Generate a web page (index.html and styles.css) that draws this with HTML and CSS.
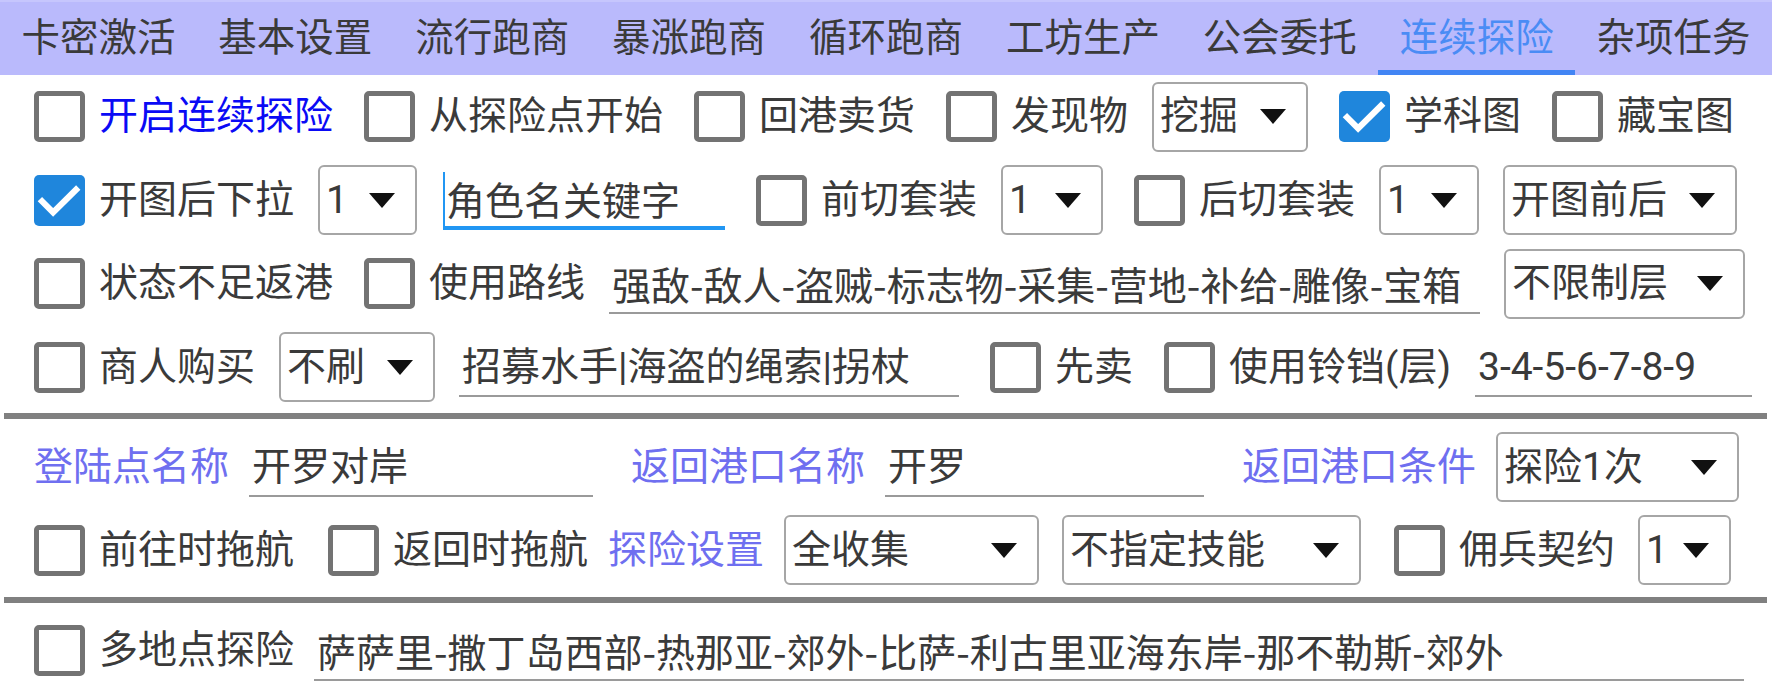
FILE: index.html
```html
<!DOCTYPE html>
<html lang="zh-CN">
<head>
<meta charset="utf-8">
<title>连续探险</title>
<link rel="stylesheet" href="styles.css">
</head>
<body>
<div class="tabs">
  <div class="tab">卡密激活</div>
  <div class="tab">基本设置</div>
  <div class="tab">流行跑商</div>
  <div class="tab">暴涨跑商</div>
  <div class="tab">循环跑商</div>
  <div class="tab">工坊生产</div>
  <div class="tab">公会委托</div>
  <div class="tab active">连续探险</div>
  <div class="tab">杂项任务</div>
</div>

<div class="panel">
  <div class="row top">
    <div class="cb"><span class="box"></span><span class="lbl blue">开启连续探险</span></div>
    <div class="cb"><span class="box"></span><span class="lbl">从探险点开始</span></div>
    <div class="cb"><span class="box"></span><span class="lbl">回港卖货</span></div>
    <div class="cb"><span class="box"></span><span class="lbl">发现物</span></div>
    <div class="sel w156"><span>挖掘</span><span class="arrow"></span></div>
    <div class="cb"><span class="box on"><svg viewBox="0 0 24 24"><path d="M3.8 12.4 L9 17.6 L19.8 6.9" fill="none" stroke="#fff" stroke-width="2.9" stroke-linecap="square"/></svg></span><span class="lbl">学科图</span></div>
    <div class="cb"><span class="box"></span><span class="lbl">藏宝图</span></div>
  </div>

  <div class="row top">
    <div class="cb"><span class="box on"><svg viewBox="0 0 24 24"><path d="M3.8 12.4 L9 17.6 L19.8 6.9" fill="none" stroke="#fff" stroke-width="2.9" stroke-linecap="square"/></svg></span><span class="lbl">开图后下拉</span></div>
    <div class="sel w99"><span>1</span><span class="arrow"></span></div>
    <div class="inp focus w282 after-sel"><span class="caret"></span><span>角色名关键字</span></div>
    <div class="cb"><span class="box"></span><span class="lbl">前切套装</span></div>
    <div class="sel w102"><span>1</span><span class="arrow"></span></div>
    <div class="cb"><span class="box"></span><span class="lbl">后切套装</span></div>
    <div class="sel w100"><span>1</span><span class="arrow"></span></div>
    <div class="sel w234"><span>开图前后</span><span class="arrow"></span></div>
  </div>

  <div class="row top">
    <div class="cb"><span class="box"></span><span class="lbl">状态不足返港</span></div>
    <div class="cb"><span class="box"></span><span class="lbl">使用路线</span></div>
    <div class="inp cjk w871"><span>强敌-敌人-盗贼-标志物-采集-营地-补给-雕像-宝箱</span></div>
    <div class="sel w241"><span>不限制层</span><span class="arrow"></span></div>
  </div>

  <div class="row top">
    <div class="cb"><span class="box"></span><span class="lbl">商人购买</span></div>
    <div class="sel w156"><span>不刷</span><span class="arrow"></span></div>
    <div class="inp w500"><span>招募水手|海盗的绳索|拐杖</span></div>
    <div class="cb"><span class="box"></span><span class="lbl">先卖</span></div>
    <div class="cb"><span class="box"></span><span class="lbl">使用铃铛(层)</span></div>
    <div class="inp w277"><span>3-4-5-6-7-8-9</span></div>
  </div>

  <div class="divider first"></div>

  <div class="row port">
    <span class="title">登陆点名称</span>
    <div class="inp w344 near"><span>开罗对岸</span></div>
    <span class="title far">返回港口名称</span>
    <div class="inp w319 near"><span>开罗</span></div>
    <span class="title far">返回港口条件</span>
    <div class="sel w243 near"><span>探险1次</span><span class="arrow"></span></div>
  </div>

  <div class="row tow">
    <div class="cb"><span class="box"></span><span class="lbl">前往时拖航</span></div>
    <div class="cb wide"><span class="box"></span><span class="lbl">返回时拖航</span></div>
    <span class="title near">探险设置</span>
    <div class="sel w255 near"><span>全收集</span><span class="arrow"></span></div>
    <div class="sel w299 snug"><span>不指定技能</span><span class="arrow"></span></div>
    <div class="cb after-wide"><span class="box"></span><span class="lbl">佣兵契约</span></div>
    <div class="sel w93 snug"><span>1</span><span class="arrow"></span></div>
  </div>

  <div class="divider second"></div>

  <div class="row multi">
    <div class="cb"><span class="box"></span><span class="lbl">多地点探险</span></div>
    <div class="inp cjk w1430 near"><span>萨萨里-撒丁岛西部-热那亚-郊外-比萨-利古里亚海东岸-那不勒斯-郊外</span></div>
  </div>
</div>
</body>
</html>
```

FILE: styles.css
```css
* {
  box-sizing: border-box;
}

html, body {
  margin: 0;
  padding: 0;
}

body {
  width: 1772px;
  height: 696px;
  overflow: hidden;
  background: #ffffff;
  color: #3a3a3a;
  font-family: Roboto, "Noto Sans CJK SC", sans-serif;
  font-size: 39px;
  line-height: 1.2;
}

/* ---------- tab bar ---------- */
.tabs {
  display: flex;
  height: 75px;
  background: #babafc;
  border-top: 2px solid #c6c6fd;
}

.tab {
  flex: 1 1 0;
  display: flex;
  align-items: center;
  justify-content: center;
  font-size: 38.5px;
  color: #3a3a3a;
  white-space: nowrap;
}

.tab.active {
  color: #4a8cf5;
  box-shadow: inset 0 -5px 0 #4285f4;
}

/* ---------- rows ---------- */
.row {
  display: flex;
  align-items: center;
  padding-left: 34px;
  white-space: nowrap;
}

.row > * + * {
  margin-left: 24px;
}

.row > * + .cb {
  margin-left: 31px;
}

.row.top {
  height: 83.5px;
}

.row.port {
  height: 96px;
}

.row.tow {
  height: 70px;
}

.row.multi {
  height: 95px;
}

/* checkbox */
.cb {
  display: flex;
  align-items: center;
  flex: none;
}

.box {
  width: 51px;
  height: 51px;
  border: 5px solid #737373;
  border-radius: 5px;
  flex: none;
  background: #ffffff;
}

.box.on {
  border: none;
  background: #1f86dc;
  display: flex;
}

.box.on svg {
  width: 51px;
  height: 51px;
}

.lbl {
  margin-left: 14px;
}

.blue {
  color: #0a0af5;
}

.title {
  color: #6f6ff0;
  flex: none;
}

/* select */
.sel {
  height: 70px;
  border: 2px solid #a6a6a6;
  border-radius: 6px;
  display: flex;
  align-items: center;
  justify-content: space-between;
  padding: 0 20px 0 6px;
  flex: none;
}

.arrow {
  width: 0;
  height: 0;
  border-left: 13px solid transparent;
  border-right: 13px solid transparent;
  border-top: 15px solid #111111;
  flex: none;
}

/* text input */
.inp {
  height: 60px;
  border-bottom: 2px solid #9a9a9a;
  display: flex;
  align-items: center;
  padding-left: 3px;
  padding-top: 2px;
  flex: none;
  overflow: hidden;
}

.inp.cjk {
  font-family: "Noto Sans CJK SC", Roboto, sans-serif;
}

.inp.focus {
  border-bottom: 4px solid #2196f3;
  padding-left: 0;
  padding-top: 8px;
}

.caret {
  width: 2px;
  align-self: stretch;
  background: #2196f3;
  margin-top: -6px;
  margin-right: 1px;
  flex: none;
}

/* widths */
.w93 { width: 93px; }
.w99 { width: 99px; }
.w100 { width: 100px; }
.w102 { width: 102px; }
.w156 { width: 156px; }
.w234 { width: 234px; }
.w241 { width: 241px; }
.w243 { width: 243px; }
.w255 { width: 255px; }
.w277 { width: 277px; }
.w282 { width: 282px; }
.w299 { width: 299px; }
.w319 { width: 319px; }
.w344 { width: 344px; }
.w500 { width: 500px; }
.w871 { width: 871px; }
.w1430 { width: 1430px; }

.row > .after-sel { margin-left: 26px; }
.row > .near { margin-left: 20px; }
.row > .snug { margin-left: 23px; }
.row > .far { margin-left: 38px; }
.row > .cb.wide { margin-left: 34px; }
.row > .cb.after-wide { margin-left: 33px; }

/* dividers */
.divider {
  height: 6px;
  background: #808080;
  margin: 0 5px 0 4px;
}

.divider.first {
  margin-top: 4px;
}

.divider.second {
  margin-top: 12px;
}
```
